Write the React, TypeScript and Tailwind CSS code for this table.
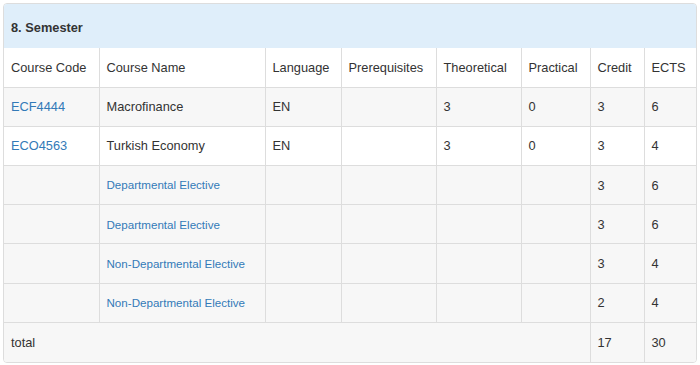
import React from "react";

const link = "text-[#337ab7]";

type Row = {
  code?: string;
  name: string;
  nameLink?: boolean;
  lang?: string;
  pre?: string;
  th?: string;
  pr?: string;
  credit: string;
  ects: string;
  gray: boolean;
};

const rows: Row[] = [
  { code: "ECF4444", name: "Macrofinance", lang: "EN", th: "3", pr: "0", credit: "3", ects: "6", gray: true },
  { code: "ECO4563", name: "Turkish Economy", lang: "EN", th: "3", pr: "0", credit: "3", ects: "4", gray: false },
  { name: "Departmental Elective", nameLink: true, credit: "3", ects: "6", gray: true },
  { name: "Departmental Elective", nameLink: true, credit: "3", ects: "6", gray: true },
  { name: "Non-Departmental Elective", nameLink: true, credit: "3", ects: "4", gray: true },
  { name: "Non-Departmental Elective", nameLink: true, credit: "2", ects: "4", gray: true },
];

const td = "border border-[#dddddd] px-[7px] h-[39.2px] align-middle whitespace-nowrap";

export default function App() {
  return (
    <div className="w-[700px] h-[365px] bg-white p-[3px] text-[12.8px] text-[#333333]" style={{ fontFamily: '"Liberation Sans", Arial, sans-serif' }}>
      <div className="border border-[#dddddd] rounded-[4px] overflow-hidden">
        <div className="bg-[#dfeefa] h-[45px] flex items-center pt-[3px] px-[7px] font-bold text-[12.8px] border-b border-[#dddddd]">
          8. Semester
        </div>
        <table className="w-full border-collapse table-fixed -mt-px">
          <colgroup>
            <col className="w-[95px]" />
            <col className="w-[166px]" />
            <col className="w-[76px]" />
            <col className="w-[95px]" />
            <col className="w-[85px]" />
            <col className="w-[69px]" />
            <col className="w-[54px]" />
            <col />
          </colgroup>
          <tbody>
            <tr className="bg-white">
              {["Course Code", "Course Name", "Language", "Prerequisites", "Theoretical", "Practical", "Credit", "ECTS"].map((h) => (
                <td key={h} className={`${td} border-t-0 first:border-l-0 last:border-r-0`}>{h}</td>
              ))}
            </tr>
            {rows.map((r, i) => (
              <tr key={i} className={r.gray ? "bg-[#f7f7f7]" : "bg-white"}>
                <td className={`${td} border-l-0 ${link}`}>{r.code ?? ""}</td>
                <td className={`${td} ${r.nameLink ? `${link} text-[11.6px]` : ""}`}>{r.name}</td>
                <td className={td}>{r.lang ?? ""}</td>
                <td className={td}>{r.pre ?? ""}</td>
                <td className={td}>{r.th ?? ""}</td>
                <td className={td}>{r.pr ?? ""}</td>
                <td className={td}>{r.credit}</td>
                <td className={`${td} border-r-0`}>{r.ects}</td>
              </tr>
            ))}
            <tr className="bg-[#f7f7f7]">
              <td colSpan={6} className={`${td} border-l-0 border-b-0`}>total</td>
              <td className={`${td} border-b-0`}>17</td>
              <td className={`${td} border-r-0 border-b-0`}>30</td>
            </tr>
          </tbody>
        </table>
      </div>
    </div>
  );
}
